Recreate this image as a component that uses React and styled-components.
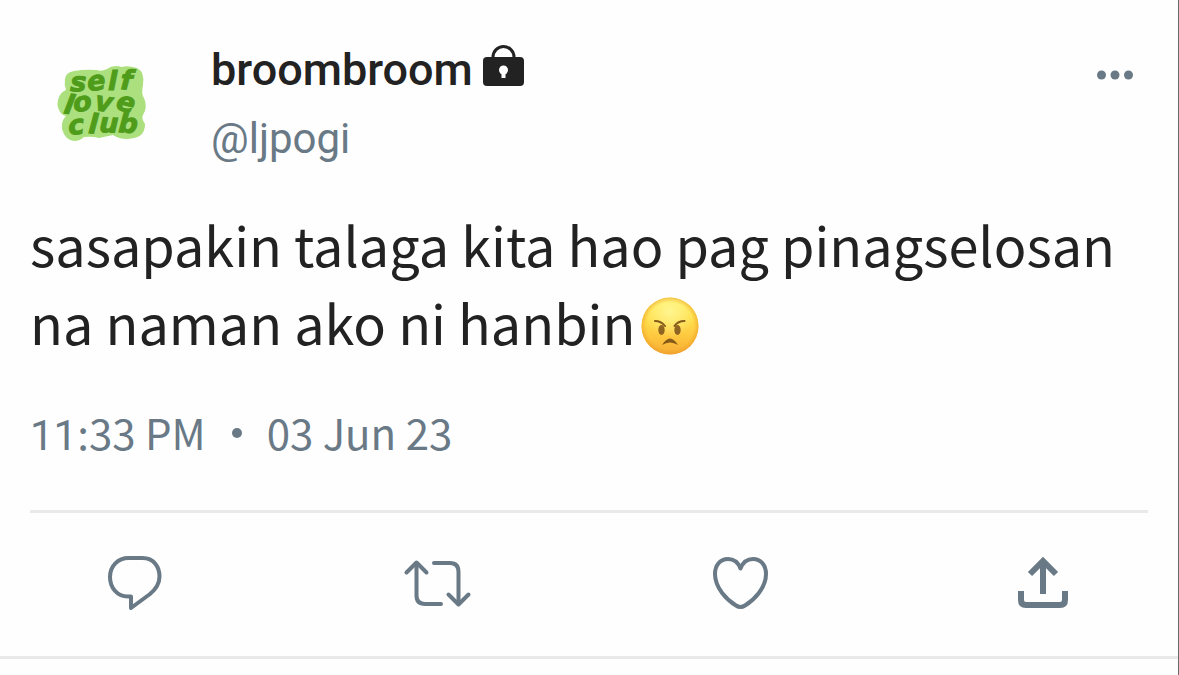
import React from "react"
import styled, { createGlobalStyle } from "styled-components"

const SLATE = `#697986`
const INK = `#222222`
const LINE = `#e9e9e9`

const GlobalStyle = createGlobalStyle`
  *, *::before, *::after {
    box-sizing: border-box;
  }

  body {
    margin: 0;
    background: #fefefe;
  }
`

const actions = [
  { label: `Reply`, Icon: ReplyIcon },
  { label: `Retweet`, Icon: RetweetIcon },
  { label: `Like`, Icon: HeartIcon },
  { label: `Share`, Icon: ShareIcon },
]

const App = () => {
  return (
    <Page>
      <GlobalStyle />
      <Tweet>
        <Header>
          <Avatar />
          <Author>
            <Name>
              broombroom
              <LockIcon />
            </Name>
            <Handle href="#profile">@ljpogi</Handle>
          </Author>
          <IconButton type="button" aria-label="More">
            <MoreIcon />
          </IconButton>
        </Header>
        <Body>
          sasapakin talaga kita hao pag pinagselosan na naman ako ni hanbin
          <AngryFace />
        </Body>
        <Meta>
          <time>
            <Hour>11</Hour>:33 PM
          </time>
          <Dot />
          <time dateTime="2023-06-03">03 Jun 23</time>
        </Meta>
        <Actions>
          {actions.map(({ label, Icon }) => (
            <IconButton type="button" aria-label={label} key={label}>
              <Icon />
            </IconButton>
          ))}
        </Actions>
      </Tweet>
    </Page>
  )
}

export default App

function Avatar() {
  return (
    <Logo viewBox="0 0 90 78" role="img" aria-label="self love club">
      <path
        d="M17 6Q9 7 8 14Q7 20 9 25Q4 27 2 32Q-1 39 2 45Q4 50 9 51Q4 56 5 64Q8 75 17 76Q23 76 27 72Q35 71 42 73L56 70Q65 76 77 73Q88 71 88 59Q84 53 86 50Q91 42 87 33Q84 29 86 20Q88 7 80 3Q70 0 65 2Q56 -1 50 4Q44 7 40 5Q28 4 17 6Z"
        fill="#ace07e"
      />
      <LogoText>
        <tspan x="13 31 51 63" y="26 26 25 24" rotate="2 -6 0 4">
          self
        </tspan>
        <tspan x="6 17 37 58" y="48 47 45 44" rotate="10 -6 8 14">
          love
        </tspan>
        <tspan x="12 31 42 61" y="70 68 67 67" rotate="-6 4 2 4">
          club
        </tspan>
      </LogoText>
    </Logo>
  )
}

function LockIcon() {
  return (
    <Lock viewBox="0 0 41 42" role="img" aria-label="Protected account">
      <path
        d="M10 14V12a10.500 10.500 0 0 1 21 0V14"
        fill="none"
        stroke={INK}
        strokeWidth="3"
      />
      <rect y="12" width="41" height="29" rx="4" fill={INK} />
      <circle cx="20.500" cy="25" r="4.500" fill="#fefefe" />
      <path d="M18.500 27h4v6h-4z" fill="#fefefe" />
    </Lock>
  )
}

function MoreIcon() {
  return (
    <svg width="36" height="10" viewBox="0 0 36 10" fill={SLATE}>
      <circle cx="4.500" cy="5" r="4.500" />
      <circle cx="18" cy="5" r="4.500" />
      <circle cx="31.500" cy="5" r="4.500" />
    </svg>
  )
}

function AngryFace() {
  return (
    <Emoji viewBox="0 0 58 58" role="img" aria-label="😠">
      <defs>
        <linearGradient id="skin" x1="0" y1="0" x2="0" y2="1">
          <stop offset="0" stopColor="#fff05c" />
          <stop offset="0.400" stopColor="#ffdd4c" />
          <stop offset="0.750" stopColor="#fdc23b" />
          <stop offset="1" stopColor="#f6ac38" />
        </linearGradient>
        <radialGradient id="rim">
          <stop offset="0.820" stopColor="#f0a020" stopOpacity="0" />
          <stop offset="1" stopColor="#e89420" stopOpacity="0.500" />
        </radialGradient>
        <radialGradient id="shine" cx="0.500" cy="0.250" r="0.450">
          <stop offset="0" stopColor="#fff9a0" stopOpacity="0.800" />
          <stop offset="1" stopColor="#fff9a0" stopOpacity="0" />
        </radialGradient>
      </defs>
      <circle cx="29" cy="29" r="28.500" fill="url(#skin)" />
      <circle cx="29" cy="29" r="28.500" fill="url(#shine)" />
      <circle cx="29" cy="29" r="28.500" fill="url(#rim)" />
      <ellipse cx="20.500" cy="33" rx="3.200" ry="5" fill="#8f6420" />
      <ellipse cx="36.500" cy="33" rx="3.200" ry="5" fill="#8f6420" />
      <g fill="none" stroke="#855a1a" strokeLinecap="round" strokeWidth="2">
        <path d="M14 24Q20 24 24 29" />
        <path d="M43.500 24Q37 24 33.500 29" />
      </g>
      <path d="M21 48Q29 35 37 48Q29 43 21 48Z" fill="#855a1a" />
    </Emoji>
  )
}

function ReplyIcon() {
  return (
    <Glyph>
      <path d="M38.500 18h14C64 18 69.500 27 69.500 36.500C69.500 43 66 49 60 54L41 68V56.500H38C26.500 56.500 20 47 20 37C20 26 28 18 38.500 18Z" />
    </Glyph>
  )
}

function RetweetIcon() {
  return (
    <Glyph>
      <path d="M13.500 32.500L23.500 22.500L33.500 32.500" />
      <path d="M23.500 24v31.500q0 8.500 8.500 8.500h16" />
      <path d="M41 23h16q8.500 0 8.500 9v31" />
      <path d="M55.500 54.500L65.500 64.500L75.500 54.500" />
    </Glyph>
  )
}

function HeartIcon() {
  return (
    <Glyph>
      <path d="M43.500 28.500C41 22 36 19 31 19C23 19 18 25.500 18 34C18 48 30 60 39 65.500Q43.500 68.500 48 65.500C57 60 69 48 69 34C69 25.500 64 19 56 19C51 19 46 22 43.500 28.500Z" />
    </Glyph>
  )
}

function ShareIcon() {
  return (
    <Glyph $square>
      <path d="M43 54V22" />
      <path d="M30 34L43 21L56 34" />
      <path d="M21 51v9q0 5 5 5h34q5 0 5-5v-9" />
    </Glyph>
  )
}

const Page = styled.main`
  min-height: 100vh;
  border-right: 1px solid #6a6a6a;
  background: #fefefe;
`

const Tweet = styled.article`
  padding: 40px 30px 26px;
  border-bottom: 3px solid ${LINE};
  color: ${INK};
`

const Header = styled.header`
  display: flex;
  align-items: flex-start;
  padding: 0 15px 0 27px;

  > button {
    margin: 30px 0 0 auto;
  }
`

const Logo = styled.svg`
  flex: none;
  width: 90px;
  margin: 25px 64px 0 0;
  overflow: visible;
`

const LogoText = styled.text`
  font: italic 700 27px "DejaVu Sans", sans-serif;
  fill: #4f9c1b;
  stroke: #4f9c1b;
  stroke-width: 1px;
`

const Author = styled.div`
  display: flex;
  flex-direction: column;
`

const Name = styled.h1`
  display: flex;
  align-items: center;
  gap: 10px;
  margin: 0;
  font: 500 45px/60px "Roboto", sans-serif;
`

const Lock = styled.svg`
  width: 41px;
  margin-bottom: 8px;
`

const Handle = styled.a`
  margin-top: 9px;
  color: ${SLATE};
  font: 400 42px/60px "Roboto", sans-serif;
  text-decoration: none;
`

const Body = styled.p`
  margin: 36px 0 0;
  font: 400 54px/78px "Noto Sans CJK SC", sans-serif;
`

const Emoji = styled.svg`
  width: 58px;
  margin-left: 6px;
  vertical-align: -10px;
`

const Meta = styled.div`
  display: flex;
  align-items: center;
  margin-top: 41px;
  color: ${SLATE};
  font: 400 42px/60px "Noto Sans CJK SC", sans-serif;
`

const Hour = styled.span`
  font-family: "Roboto", sans-serif;
  line-height: 1;
`

const Dot = styled.span`
  width: 10px;
  height: 10px;
  margin: 2px 25px 0 26px;
  border-radius: 50%;
  background: ${SLATE};
`

const Actions = styled.div`
  display: flex;
  justify-content: space-between;
  margin-top: 48px;
  padding: 27px 58px 0 60px;
  border-top: 3px solid ${LINE};
`

const IconButton = styled.button`
  display: flex;
  padding: 0;
  border: 0;
  background: none;
  cursor: pointer;
`

const Glyph = styled.svg.attrs({ viewBox: `0 0 90 90` })`
  width: 90px;
  height: 90px;
  fill: none;
  stroke: ${SLATE};
  stroke-width: ${props => (props.$square ? 6 : 4)}px;
  stroke-linecap: ${props => (props.$square ? `butt` : `round`)};
  stroke-linejoin: ${props => (props.$square ? `miter` : `round`)};
`
